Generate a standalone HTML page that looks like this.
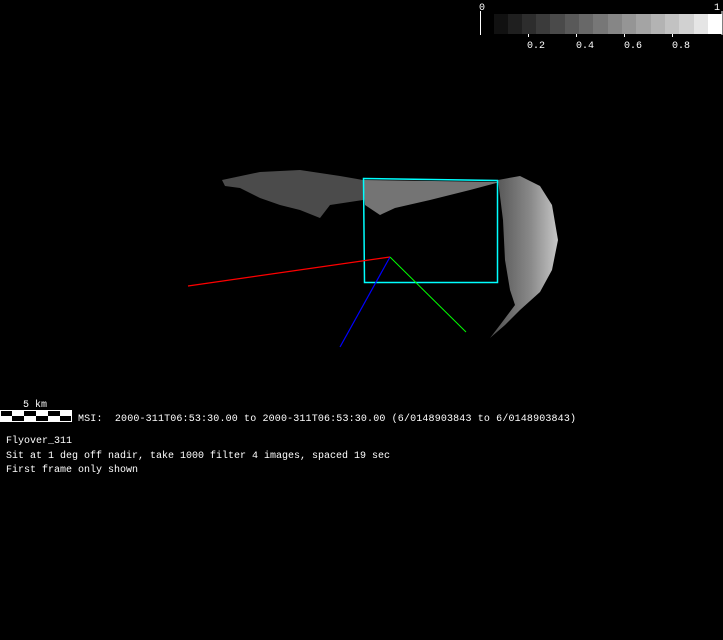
<!DOCTYPE html>
<html><head><style>
body{margin:0;background:#000;width:723px;height:640px;overflow:hidden}
svg{position:absolute;left:0;top:0}
text{font-family:"Liberation Mono",monospace;font-size:10px;fill:#fff}
</style></head><body>
<svg width="723" height="640" viewBox="0 0 723 640">
<g>
<rect x="494" y="14" width="14" height="20" fill="#111"/>
<rect x="508" y="14" width="14" height="20" fill="#1f1f1f"/>
<rect x="522" y="14" width="14" height="20" fill="#2d2d2d"/>
<rect x="536" y="14" width="14" height="20" fill="#3b3b3b"/>
<rect x="550" y="14" width="15" height="20" fill="#4a4a4a"/>
<rect x="565" y="14" width="14" height="20" fill="#595959"/>
<rect x="579" y="14" width="14" height="20" fill="#686868"/>
<rect x="593" y="14" width="15" height="20" fill="#777"/>
<rect x="608" y="14" width="14" height="20" fill="#868686"/>
<rect x="622" y="14" width="14" height="20" fill="#959595"/>
<rect x="636" y="14" width="15" height="20" fill="#a4a4a4"/>
<rect x="651" y="14" width="14" height="20" fill="#b3b3b3"/>
<rect x="665" y="14" width="14" height="20" fill="#c2c2c2"/>
<rect x="679" y="14" width="15" height="20" fill="#d1d1d1"/>
<rect x="694" y="14" width="14" height="20" fill="#e5e5e5"/>
<rect x="708" y="14" width="14" height="20" fill="#fff"/>
<line x1="480.5" y1="11" x2="480.5" y2="35" stroke="#fff"/>
<line x1="722" y1="11" x2="722" y2="35" stroke="#fff"/>
<line x1="528.5" y1="34" x2="528.5" y2="37" stroke="#fff"/>
<line x1="576.5" y1="34" x2="576.5" y2="37" stroke="#fff"/>
<line x1="624.5" y1="34" x2="624.5" y2="37" stroke="#fff"/>
<line x1="672.5" y1="34" x2="672.5" y2="37" stroke="#fff"/>
<text x="479" y="10">0</text>
<text x="714" y="10">1</text>
<text x="527" y="48">0.2</text>
<text x="576" y="48">0.4</text>
<text x="624" y="48">0.6</text>
<text x="672" y="48">0.8</text>
</g>
<g fill="#888">
<path d="M222 180 L260 172 L300 170 L340 176 L363 180 L363 200 L330 205 L320 218 L300 210 L280 205 L260 198 L240 188 L225 186 Z" opacity="0.55"/>
<path d="M363 180 L500 182 L470 190 L430 200 L395 208 L380 215 L365 205 Z" opacity="0.85"/>
</g>
<defs><linearGradient id="g" x1="0" x2="1" y1="0" y2="0">
<stop offset="0" stop-color="#555"/><stop offset="0.6" stop-color="#999"/><stop offset="1" stop-color="#ddd"/></linearGradient></defs>
<path d="M498 180 L520 176 L540 186 L552 205 L558 240 L552 270 L540 292 L520 310 L505 325 L490 338 L500 325 L515 305 L510 290 L505 260 L503 220 Z" fill="url(#g)" opacity="0.9"/>
<path d="M363.5 178.5 L497.5 180.5 L497.5 282.5 L364.5 282.5 Z" fill="none" stroke="#0ff" stroke-width="1.5"/>
<line x1="188" y1="286" x2="390" y2="257" stroke="#f00" stroke-width="1.2"/>
<line x1="390" y1="257" x2="340" y2="347" stroke="#00f" stroke-width="1.2"/>
<line x1="390" y1="257" x2="466" y2="332" stroke="#0f0" stroke-width="1"/>
<rect x="0" y="410" width="72" height="12" fill="#fff"/>
<rect x="0" y="410" width="12" height="6" fill="#000"/>
<rect x="24" y="410" width="12" height="6" fill="#000"/>
<rect x="48" y="410" width="12" height="6" fill="#000"/>
<rect x="12" y="416" width="12" height="6" fill="#000"/>
<rect x="36" y="416" width="12" height="6" fill="#000"/>
<rect x="60" y="416" width="12" height="6" fill="#000"/>
<rect x="0.5" y="410.5" width="71" height="11" fill="none" stroke="#fff"/>
<text x="23" y="407">5 km</text>
<text x="78" y="421" xml:space="preserve" textLength="498" lengthAdjust="spacing">MSI:  2000-311T06:53:30.00 to 2000-311T06:53:30.00 (6/0148903843 to 6/0148903843)</text>
<text x="6" y="443">Flyover_311</text>
<text x="6" y="458">Sit at 1 deg off nadir, take 1000 filter 4 images, spaced 19 sec</text>
<text x="6" y="472">First frame only shown</text>
</svg>
</body></html>
